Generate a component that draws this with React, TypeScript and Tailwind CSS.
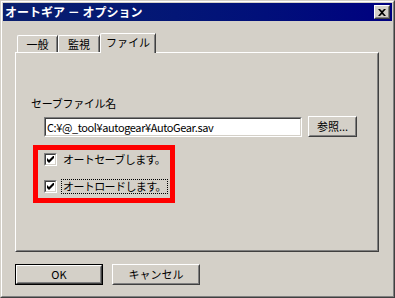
const FONT = { fontFamily: '"Noto Sans CJK JP", "Noto Sans", sans-serif' };

function Raised({ className = "", children }: { className?: string; children?: React.ReactNode }) {
  return (
    <div className={`border border-t-white border-l-white border-r-[#404040] border-b-[#404040] ${className}`}>
      <div className="w-full h-full border border-transparent border-r-[#808080] border-b-[#808080] flex items-center justify-center">
        {children}
      </div>
    </div>
  );
}

function CheckBox() {
  return (
    <div className="w-[13px] h-[13px] shrink-0 border border-t-[#808080] border-l-[#808080] border-r-white border-b-white">
      <div className="w-full h-full border border-t-[#404040] border-l-[#404040] border-r-[#d4d0c8] border-b-[#d4d0c8] bg-white flex items-center justify-center">
        <svg width="7" height="7" viewBox="0 0 7 7">
          <path d="M0 2v3l2 2 5-5V-1L2 4z" fill="#000" />
        </svg>
      </div>
    </div>
  );
}

function Tab({ label, selected, w }: { label: string; selected?: boolean; w: string }) {
  return (
    <div
      className={`${w} ${selected ? "h-[20px] -mb-px z-10 bg-[#d4d0c8]" : "h-[17px]"} relative shrink-0 border-t border-l border-r border-t-white border-l-white border-r-[#404040] rounded-tl-[2px] flex items-center justify-center text-[11px] text-black`}
    >
      <div className="absolute right-0 top-px bottom-0 w-px bg-[#808080]" />
      <span className={selected ? "-mt-[2px]" : ""}>{label}</span>
    </div>
  );
}

export default function App() {
  return (
    <div className="w-[395px] h-[298px] bg-[#d4d0c8] border border-t-[#d4d0c8] border-l-[#d4d0c8] border-r-[#404040] border-b-[#404040] flex flex-col" style={FONT}>
      <div className="flex-1 border border-t-white border-l-white border-r-[#808080] border-b-[#808080] p-px flex flex-col">
        {/* title bar */}
        <div className="h-[18px] shrink-0 bg-gradient-to-r from-[#0a1f6e] to-[#000080] flex items-center justify-between pl-[2px] pr-[2px]">
          <span className="text-white font-bold text-[12px] leading-none">オートギア － オプション</span>
          <Raised className="w-[16px] h-[14px] bg-[#d4d0c8]">
            <svg width="8" height="7" viewBox="0 0 8 7">
              <path d="M0 0h2l2 2 2-2h2L5 3.5 8 7H6L4 5 2 7H0l3-3.5z" fill="#000" />
            </svg>
          </Raised>
        </div>

        <div className="flex-1 flex flex-col pl-[12px] pr-[13px] pb-[10px]">
          {/* tabs */}
          <div className="flex items-end mt-[12px] pl-[2px] h-[19px] shrink-0">
            <Tab label="一般" w="w-[41px]" />
            <Tab label="監視" w="w-[42px]" />
            <Tab label="ファイル" w="w-[56px]" selected />
          </div>

          {/* panel */}
          <div className="flex-1 flex flex-col border border-t-white border-l-white border-r-[#404040] border-b-[#404040]">
            <div className="flex-1 border border-transparent border-r-[#808080] border-b-[#808080] pt-[42px] pl-[14px] text-[11px] text-black">
              <div className="leading-[14px] tracking-[-0.3px]">セーブファイル名</div>

              <div className="flex items-start gap-[6px] mt-[6px] ml-[13px]">
                <div className="mt-px w-[258px] h-[20px] border border-t-[#808080] border-l-[#808080] border-r-white border-b-white">
                  <div className="w-full h-full border border-t-[#404040] border-l-[#404040] border-r-[#d4d0c8] border-b-[#d4d0c8] bg-white flex items-center pl-px tracking-[-0.4px] text-[11px]">
                    C:¥@_tool¥autogear¥AutoGear.sav
                  </div>
                </div>
                <Raised className="w-[49px] h-[21px]">
                  <span className="text-[11px]">参照...</span>
                </Raised>
              </div>

              <div className="mt-[8px] ml-[2px] w-[142px] h-[58px] border-[5px] border-[#ff0000] pl-[6px] pt-[3px] flex flex-col gap-[14px]">
                <div className="flex items-center h-[13px] whitespace-nowrap">
                  <CheckBox />
                  <span className="ml-[4px] px-px border border-transparent leading-[13px] tracking-[-0.6px]">オートセーブします。</span>
                </div>
                <div className="flex items-center h-[13px] whitespace-nowrap">
                  <CheckBox />
                  <span className="ml-[4px] px-px border border-dotted border-black leading-[13px] tracking-[-0.6px]">オートロードします。</span>
                </div>
              </div>
            </div>
          </div>

          {/* buttons */}
          <div className="flex gap-[9px] mt-[12px] text-[11px] shrink-0">
            <div className="w-[88px] h-[21px] border border-black">
              <Raised className="w-full h-full">OK</Raised>
            </div>
            <Raised className="w-[88px] h-[21px]">キャンセル</Raised>
          </div>
        </div>
      </div>
    </div>
  );
}
